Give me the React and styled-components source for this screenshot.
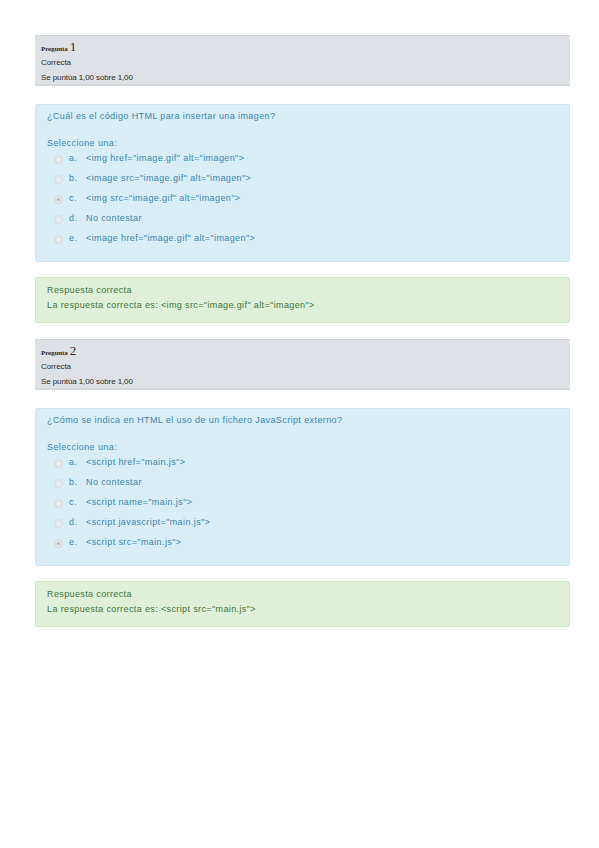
import React from "react";
import styled, { createGlobalStyle } from "styled-components";

const GlobalStyle = createGlobalStyle`
  html, body {
    margin: 0;
    padding: 0;
    background: #ffffff;
  }
  body {
    font-family: "Liberation Sans", Arial, sans-serif;
  }
`;

const Page = styled.div`
  width: 599px;
  height: 848px;
  padding: 35px 29px 0 35px;
  box-sizing: border-box;
  display: flex;
  flex-direction: column;
`;

const Question = styled.section`
  display: flex;
  flex-direction: column;
  margin-bottom: 16px;
`;

const Info = styled.div`
  background: #dee1e5;
  border-top: 1px solid #d2d5d9;
  border-bottom: 2px solid #d3d6da;
  height: 51px;
  box-sizing: border-box;
  padding: 3px 6px 0;
  color: #2a2a2a;
`;

const QNo = styled.div`
  font-family: "Liberation Serif", "Times New Roman", serif;
  font-weight: bold;
  font-size: 7px;
  line-height: 15px;
  letter-spacing: -0.1px;

  span {
    font-size: 13px;
    font-weight: normal;
    margin-left: 2px;
  }
`;

const InfoLine = styled.div`
  font-size: 8px;
  line-height: 14px;
  letter-spacing: -0.1px;
  margin-top: ${p => p.top || 0}px;
`;

const Content = styled.div`
  background: #d9edf7;
  border: 1px solid #cde6f2;
  border-radius: 2px;
  margin-top: 18px;
  height: 158px;
  box-sizing: border-box;
  padding: 5px 11px 0;
  color: #3a87ad;
  font-size: 9px;
  letter-spacing: 0.4px;
`;

const Prompt = styled.div`
  line-height: 12px;
  margin-bottom: 16px;
`;

const Label = styled.div`
  line-height: 11px;
`;

const Options = styled.div`
  display: flex;
  flex-direction: column;
  padding-left: 7px;
  margin-top: -1px;
`;

const Option = styled.div`
  display: flex;
  align-items: center;
  height: 20px;
`;

const Radio = styled.span`
  width: 9px;
  height: 9px;
  border-radius: 50%;
  background: #e4e6e8;
  border: 1px solid #d7dadc;
  box-sizing: border-box;
  margin-top: 3px;
  display: flex;
  align-items: center;
  justify-content: center;

  &::after {
    content: "";
    width: 3px;
    height: 3px;
    border-radius: 50%;
    background: ${p => (p.checked ? "#b9bcbf" : "#eef0f1")};
  }
`;

const Letter = styled.span`
  width: 17px;
  margin-left: 6px;
`;

const Feedback = styled.div`
  background: #dff0d8;
  border: 1px solid #d3e9c9;
  border-radius: 2px;
  margin-top: 15px;
  height: 46px;
  box-sizing: border-box;
  padding: 5px 11px 0;
  color: #3c763d;
  font-size: 9px;
  line-height: 15px;
  letter-spacing: 0.38px;
`;

const questions = [
  {
    n: 1,
    prompt: "¿Cuál es el código HTML para insertar una imagen?",
    options: [
      '<img href="image.gif" alt="imagen">',
      '<image src="image.gif" alt="imagen">',
      '<img src="image.gif" alt="imagen">',
      "No contestar",
      '<image href="image.gif" alt="imagen">'
    ],
    checked: 2,
    answer: '<img src="image.gif" alt="imagen">'
  },
  {
    n: 2,
    prompt: "¿Cómo se indica en HTML el uso de un fichero JavaScript externo?",
    options: [
      '<script href="main.js">',
      "No contestar",
      '<script name="main.js">',
      '<script javascript="main.js">',
      '<script src="main.js">'
    ],
    checked: 4,
    answer: '<script src="main.js">'
  }
];

const letters = ["a.", "b.", "c.", "d.", "e."];

function QuestionBlock({ q }) {
  return (
    <Question>
      <Info>
        <QNo>
          Pregunta<span>{q.n}</span>
        </QNo>
        <InfoLine top={-1}>Correcta</InfoLine>
        <InfoLine top={1}>Se puntúa 1,00 sobre 1,00</InfoLine>
      </Info>
      <Content>
        <Prompt>{q.prompt}</Prompt>
        <Label>Seleccione una:</Label>
        <Options>
          {q.options.map((o, i) => (
            <Option key={i}>
              <Radio checked={i === q.checked} />
              <Letter>{letters[i]}</Letter>
              <span>{o}</span>
            </Option>
          ))}
        </Options>
      </Content>
      <Feedback>
        <div>Respuesta correcta</div>
        <div>La respuesta correcta es: {q.answer}</div>
      </Feedback>
    </Question>
  );
}

export default function App() {
  return (
    <>
      <GlobalStyle />
      <Page>
        {questions.map(q => (
          <QuestionBlock key={q.n} q={q} />
        ))}
      </Page>
    </>
  );
}
